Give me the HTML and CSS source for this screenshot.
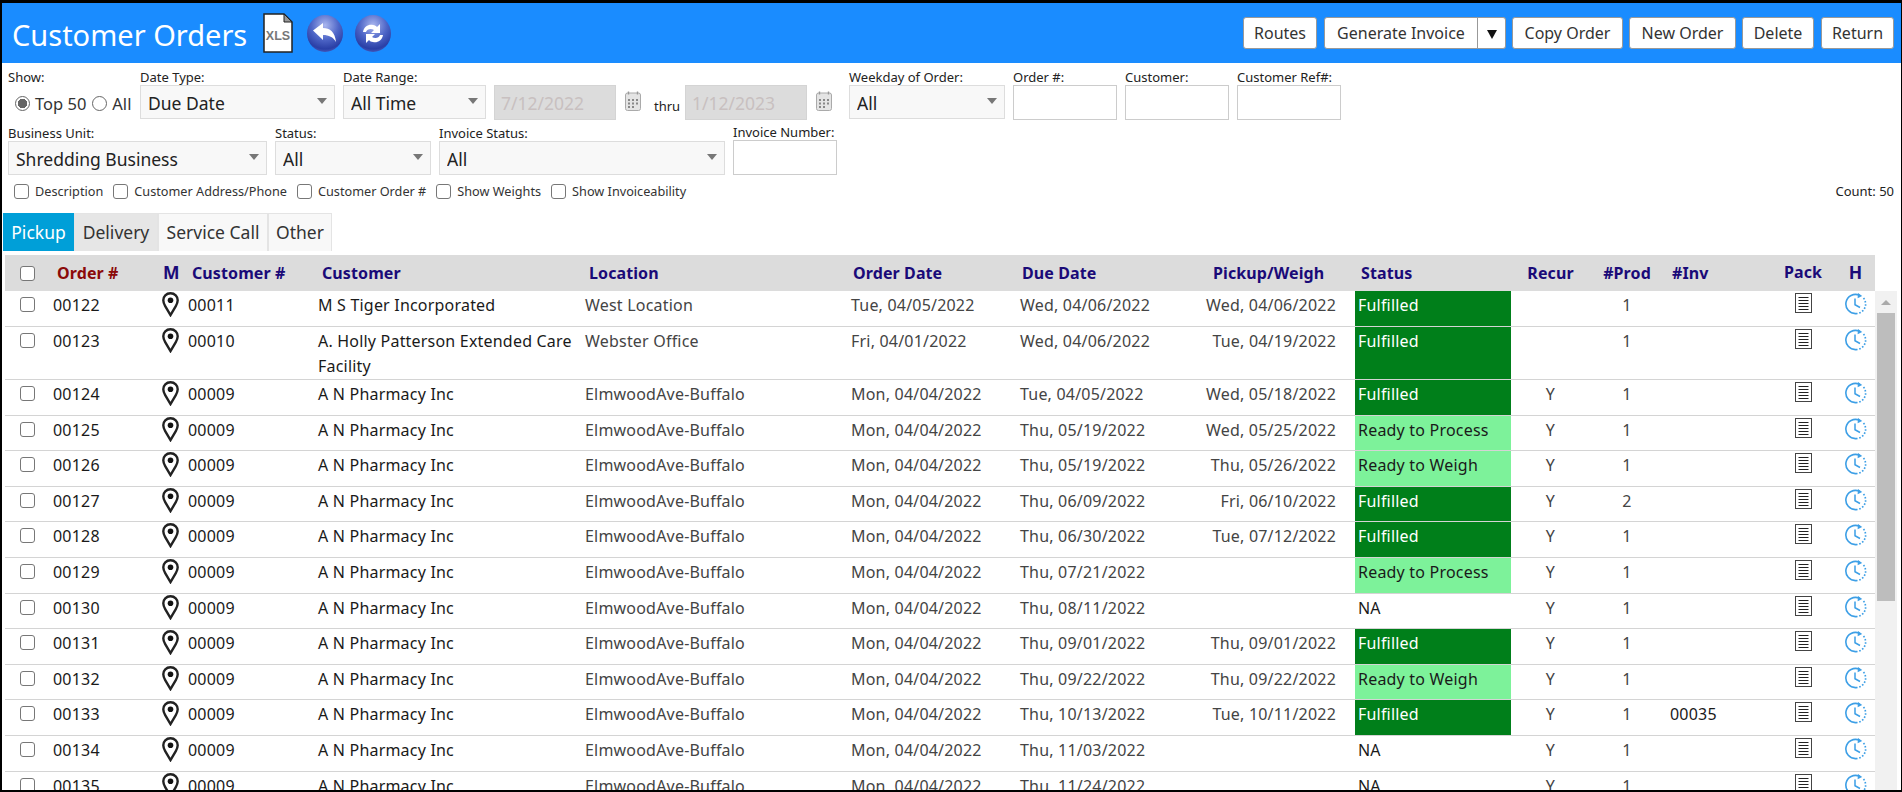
FILE: index.html
```html
<!DOCTYPE html>
<html lang="en">
<head>
  <meta charset="UTF-8" />
  <title>Customer Orders</title>
  <link rel="stylesheet" href="styles.css">
</head>
<body>
  <svg class="defs" width="0" height="0">
    <defs>
      <radialGradient id="ball" cx="50%" cy="28%" r="75%">
        <stop offset="0" stop-color="#aab6ee" />
        <stop offset="0.5" stop-color="#4f67c8" />
        <stop offset="0.85" stop-color="#2a3fa6" />
        <stop offset="1" stop-color="#4a5fc0" />
      </radialGradient>
      <symbol id="pin" viewBox="0 0 17 25">
        <path d="M8.5 1.3C4.2 1.3 1.3 4.4 1.3 8.3c0 2.2.8 3.9 1.9 5.8l5.3 9 5.3-9c1.1-1.9 1.9-3.6 1.9-5.8 0-3.9-2.9-7-7.2-7z" fill="#fff" stroke="#222" stroke-width="2.4" />
        <circle cx="8.5" cy="8.2" r="2.8" fill="#111" />
      </symbol>
      <symbol id="doc" viewBox="0 0 17 20">
        <rect x="0.5" y="0.5" width="16" height="19" fill="#fff" stroke="#444" />
        <path d="M3.5 4.5h10M3.5 7.5h10M3.5 10.5h10M3.5 13.5h10M3.5 16.5h10" stroke="#222" fill="none" />
      </symbol>
      <symbol id="clock" viewBox="0 0 22 22">
        <path d="M14.5 2.3A9.6 9.6 0 1 0 11 20.6" fill="none" stroke="#3d9fe6" stroke-width="1.6" />
        <path d="M11 20.6a9.6 9.6 0 0 0 9.6-9.6 9.6 9.6 0 0 0-2.8-6.8" fill="none" stroke="#3d9fe6" stroke-width="1.7" stroke-dasharray="1.6 1.7" />
        <path d="M13 0l4.2 3-4.6 2.2z" fill="#3d9fe6" />
        <path d="M10 5.5v6.2l5 2.8" fill="none" stroke="#3d9fe6" stroke-width="1.5" />
      </symbol>
      <symbol id="cal" viewBox="0 0 16 20">
        <rect x="0.5" y="2" width="15" height="17.5" rx="2" fill="#e4e4e4" stroke="#aaa" />
        <path d="M3.5 0.5v3M12.5 0.5v3" stroke="#999" stroke-width="1.4" />
        <path d="M3 8h2v2H3zM7 8h2v2H7zM11 8h2v2h-2zM3 11.5h2v2H3zM7 11.5h2v2H7zM11 11.5h2v2h-2zM3 15h2v2H3zM7 15h2v2H7z" fill="#888" />
      </symbol>
    </defs>
  </svg>

  <div class="page">
    <header class="topbar">
      <h1 class="title">Customer Orders</h1>
      <svg class="xls" width="30" height="40" viewBox="0 0 30 40">
        <path d="M1 1h20l8 8v30H1z" fill="#fff" stroke="#222" stroke-width="1.5" />
        <path d="M21 1v8h8z" fill="#999" stroke="#222" />
        <text x="15" y="27" text-anchor="middle" class="xls-text">XLS</text>
      </svg>
      <svg class="ball" width="36" height="37" viewBox="0 0 36 37">
        <ellipse cx="18" cy="18.5" rx="18" ry="18.5" fill="url(#ball)" />
        <path d="M6 15.5L16 8v5c7 0 12 4 13 14-3-5-7-7-13-7v5z" fill="#fff" />
      </svg>
      <svg class="ball" width="36" height="37" viewBox="0 0 36 37">
        <ellipse cx="18" cy="18.5" rx="18" ry="18.5" fill="url(#ball)" />
        <path d="M8 17c1-6 6-8 10-7 2 0 3 1 4 2l3-3v9h-9l3-3c-3-2-7-1-8 2zM28 20c-1 6-6 8-10 7-2 0-3-1-4-2l-3 3v-9h9l-3 3c3 2 7 1 8-2z" fill="#fff" />
      </svg>
      <div class="actions">
        <button class="btn w-routes">Routes</button>
        <div class="split">
          <button class="split-main">Generate Invoice</button>
          <button class="split-caret"><span class="caret"></span></button>
        </div>
        <button class="btn w-copy">Copy Order</button>
        <button class="btn w-new">New Order</button>
        <button class="btn w-delete">Delete</button>
        <button class="btn w-return">Return</button>
      </div>
    </header>

    <section class="filters">
      <div class="filter-row">
        <div class="field w-show">
          <label>Show:</label>
          <div class="radios">
            <input type="radio" name="show" checked /><span>Top 50</span>
            <input type="radio" name="show" /><span>All</span>
          </div>
        </div>
        <div class="field w-datetype">
          <label>Date Type:</label>
          <div class="dd"><select><option>Due Date</option></select></div>
        </div>
        <div class="field w-daterange">
          <label>Date Range:</label>
          <div class="dd"><select><option>All Time</option></select></div>
        </div>
        <div class="dates">
          <input class="date" type="text" value="7/12/2022" disabled />
          <svg class="cal" width="16" height="20"><use href="#cal" /></svg>
          <span class="thru">thru</span>
          <input class="date" type="text" value="1/12/2023" disabled />
          <svg class="cal" width="16" height="20"><use href="#cal" /></svg>
        </div>
        <div class="field w-weekday">
          <label>Weekday of Order:</label>
          <div class="dd"><select><option>All</option></select></div>
        </div>
        <div class="field w-num">
          <label>Order #:</label>
          <input class="num" type="text" />
        </div>
        <div class="field w-num">
          <label>Customer:</label>
          <input class="num" type="text" />
        </div>
        <div class="field w-num">
          <label>Customer Ref#:</label>
          <input class="num" type="text" />
        </div>
      </div>

      <div class="filter-row second">
        <div class="field w-unit">
          <label>Business Unit:</label>
          <div class="dd"><select><option>Shredding Business</option></select></div>
        </div>
        <div class="field w-status">
          <label>Status:</label>
          <div class="dd"><select><option>All</option></select></div>
        </div>
        <div class="field w-invstatus">
          <label>Invoice Status:</label>
          <div class="dd"><select><option>All</option></select></div>
        </div>
        <div class="field w-num">
          <label>Invoice Number:</label>
          <input class="num" type="text" />
        </div>
      </div>

      <div class="check-row">
        <label class="check"><input type="checkbox" />Description</label>
        <label class="check"><input type="checkbox" />Customer Address/Phone</label>
        <label class="check"><input type="checkbox" />Customer Order #</label>
        <label class="check"><input type="checkbox" />Show Weights</label>
        <label class="check"><input type="checkbox" />Show Invoiceability</label>
        <span class="count">Count: 50</span>
      </div>
    </section>

    <nav class="tabs">
      <a class="tab active w-pickup">Pickup</a>
      <a class="tab hover w-delivery">Delivery</a>
      <a class="tab w-service">Service Call</a>
      <a class="tab w-other">Other</a>
    </nav>

    <div class="grid-wrap">
      <table class="grid">
        <colgroup>
          <col class="c-check" /><col class="c-order" /><col class="c-map" /><col class="c-custno" />
          <col class="c-cust" /><col class="c-loc" /><col class="c-odate" /><col class="c-ddate" />
          <col class="c-pdate" /><col class="c-status" /><col class="c-recur" /><col class="c-prod" />
          <col class="c-inv" /><col class="c-pack" /><col class="c-hist" />
        </colgroup>
        <thead>
          <tr>
            <th class="ctr"><input type="checkbox" /></th>
            <th class="sorted">Order #</th>
            <th class="th-map"><span class="raised big">M</span></th>
            <th>Customer #</th>
            <th>Customer</th>
            <th>Location</th>
            <th class="tight">Order Date</th>
            <th class="tight">Due Date</th>
            <th class="th-pdate">Pickup/Weigh</th>
            <th class="tight">Status</th>
            <th class="ctr">Recur</th>
            <th class="ctr">#Prod</th>
            <th>#Inv</th>
            <th class="ctr"><span class="raised">Pack</span></th>
            <th class="ctr"><span class="raised big">H</span></th>
          </tr>
        </thead>
        <tbody>
          <tr><td class="ctr"><input type="checkbox" /></td><td class="dk">00122</td><td class="ico"><svg class="pin"><use href="#pin" /></svg></td><td class="dk">00011</td><td class="dk">M S Tiger Incorporated</td><td>West Location</td><td>Tue, 04/05/2022</td><td>Wed, 04/06/2022</td><td class="pdate">Wed, 04/06/2022</td><td class="st done">Fulfilled</td><td class="ctr"></td><td class="ctr">1</td><td class="dk"></td><td class="ctr"><svg class="doc"><use href="#doc" /></svg></td><td class="ctr"><svg class="clock"><use href="#clock" /></svg></td></tr>
          <tr><td class="ctr"><input type="checkbox" /></td><td class="dk">00123</td><td class="ico"><svg class="pin"><use href="#pin" /></svg></td><td class="dk">00010</td><td class="dk">A. Holly Patterson Extended Care Facility</td><td>Webster Office</td><td>Fri, 04/01/2022</td><td>Wed, 04/06/2022</td><td class="pdate">Tue, 04/19/2022</td><td class="st done">Fulfilled</td><td class="ctr"></td><td class="ctr">1</td><td class="dk"></td><td class="ctr"><svg class="doc"><use href="#doc" /></svg></td><td class="ctr"><svg class="clock"><use href="#clock" /></svg></td></tr>
          <tr><td class="ctr"><input type="checkbox" /></td><td class="dk">00124</td><td class="ico"><svg class="pin"><use href="#pin" /></svg></td><td class="dk">00009</td><td class="dk">A N Pharmacy Inc</td><td>ElmwoodAve-Buffalo</td><td>Mon, 04/04/2022</td><td>Tue, 04/05/2022</td><td class="pdate">Wed, 05/18/2022</td><td class="st done">Fulfilled</td><td class="ctr">Y</td><td class="ctr">1</td><td class="dk"></td><td class="ctr"><svg class="doc"><use href="#doc" /></svg></td><td class="ctr"><svg class="clock"><use href="#clock" /></svg></td></tr>
          <tr><td class="ctr"><input type="checkbox" /></td><td class="dk">00125</td><td class="ico"><svg class="pin"><use href="#pin" /></svg></td><td class="dk">00009</td><td class="dk">A N Pharmacy Inc</td><td>ElmwoodAve-Buffalo</td><td>Mon, 04/04/2022</td><td>Thu, 05/19/2022</td><td class="pdate">Wed, 05/25/2022</td><td class="st ready">Ready to Process</td><td class="ctr">Y</td><td class="ctr">1</td><td class="dk"></td><td class="ctr"><svg class="doc"><use href="#doc" /></svg></td><td class="ctr"><svg class="clock"><use href="#clock" /></svg></td></tr>
          <tr><td class="ctr"><input type="checkbox" /></td><td class="dk">00126</td><td class="ico"><svg class="pin"><use href="#pin" /></svg></td><td class="dk">00009</td><td class="dk">A N Pharmacy Inc</td><td>ElmwoodAve-Buffalo</td><td>Mon, 04/04/2022</td><td>Thu, 05/19/2022</td><td class="pdate">Thu, 05/26/2022</td><td class="st ready">Ready to Weigh</td><td class="ctr">Y</td><td class="ctr">1</td><td class="dk"></td><td class="ctr"><svg class="doc"><use href="#doc" /></svg></td><td class="ctr"><svg class="clock"><use href="#clock" /></svg></td></tr>
          <tr><td class="ctr"><input type="checkbox" /></td><td class="dk">00127</td><td class="ico"><svg class="pin"><use href="#pin" /></svg></td><td class="dk">00009</td><td class="dk">A N Pharmacy Inc</td><td>ElmwoodAve-Buffalo</td><td>Mon, 04/04/2022</td><td>Thu, 06/09/2022</td><td class="pdate">Fri, 06/10/2022</td><td class="st done">Fulfilled</td><td class="ctr">Y</td><td class="ctr">2</td><td class="dk"></td><td class="ctr"><svg class="doc"><use href="#doc" /></svg></td><td class="ctr"><svg class="clock"><use href="#clock" /></svg></td></tr>
          <tr><td class="ctr"><input type="checkbox" /></td><td class="dk">00128</td><td class="ico"><svg class="pin"><use href="#pin" /></svg></td><td class="dk">00009</td><td class="dk">A N Pharmacy Inc</td><td>ElmwoodAve-Buffalo</td><td>Mon, 04/04/2022</td><td>Thu, 06/30/2022</td><td class="pdate">Tue, 07/12/2022</td><td class="st done">Fulfilled</td><td class="ctr">Y</td><td class="ctr">1</td><td class="dk"></td><td class="ctr"><svg class="doc"><use href="#doc" /></svg></td><td class="ctr"><svg class="clock"><use href="#clock" /></svg></td></tr>
          <tr><td class="ctr"><input type="checkbox" /></td><td class="dk">00129</td><td class="ico"><svg class="pin"><use href="#pin" /></svg></td><td class="dk">00009</td><td class="dk">A N Pharmacy Inc</td><td>ElmwoodAve-Buffalo</td><td>Mon, 04/04/2022</td><td>Thu, 07/21/2022</td><td class="pdate"></td><td class="st ready">Ready to Process</td><td class="ctr">Y</td><td class="ctr">1</td><td class="dk"></td><td class="ctr"><svg class="doc"><use href="#doc" /></svg></td><td class="ctr"><svg class="clock"><use href="#clock" /></svg></td></tr>
          <tr><td class="ctr"><input type="checkbox" /></td><td class="dk">00130</td><td class="ico"><svg class="pin"><use href="#pin" /></svg></td><td class="dk">00009</td><td class="dk">A N Pharmacy Inc</td><td>ElmwoodAve-Buffalo</td><td>Mon, 04/04/2022</td><td>Thu, 08/11/2022</td><td class="pdate"></td><td class="st na">NA</td><td class="ctr">Y</td><td class="ctr">1</td><td class="dk"></td><td class="ctr"><svg class="doc"><use href="#doc" /></svg></td><td class="ctr"><svg class="clock"><use href="#clock" /></svg></td></tr>
          <tr><td class="ctr"><input type="checkbox" /></td><td class="dk">00131</td><td class="ico"><svg class="pin"><use href="#pin" /></svg></td><td class="dk">00009</td><td class="dk">A N Pharmacy Inc</td><td>ElmwoodAve-Buffalo</td><td>Mon, 04/04/2022</td><td>Thu, 09/01/2022</td><td class="pdate">Thu, 09/01/2022</td><td class="st done">Fulfilled</td><td class="ctr">Y</td><td class="ctr">1</td><td class="dk"></td><td class="ctr"><svg class="doc"><use href="#doc" /></svg></td><td class="ctr"><svg class="clock"><use href="#clock" /></svg></td></tr>
          <tr><td class="ctr"><input type="checkbox" /></td><td class="dk">00132</td><td class="ico"><svg class="pin"><use href="#pin" /></svg></td><td class="dk">00009</td><td class="dk">A N Pharmacy Inc</td><td>ElmwoodAve-Buffalo</td><td>Mon, 04/04/2022</td><td>Thu, 09/22/2022</td><td class="pdate">Thu, 09/22/2022</td><td class="st ready">Ready to Weigh</td><td class="ctr">Y</td><td class="ctr">1</td><td class="dk"></td><td class="ctr"><svg class="doc"><use href="#doc" /></svg></td><td class="ctr"><svg class="clock"><use href="#clock" /></svg></td></tr>
          <tr><td class="ctr"><input type="checkbox" /></td><td class="dk">00133</td><td class="ico"><svg class="pin"><use href="#pin" /></svg></td><td class="dk">00009</td><td class="dk">A N Pharmacy Inc</td><td>ElmwoodAve-Buffalo</td><td>Mon, 04/04/2022</td><td>Thu, 10/13/2022</td><td class="pdate">Tue, 10/11/2022</td><td class="st done">Fulfilled</td><td class="ctr">Y</td><td class="ctr">1</td><td class="dk inv">00035</td><td class="ctr"><svg class="doc"><use href="#doc" /></svg></td><td class="ctr"><svg class="clock"><use href="#clock" /></svg></td></tr>
          <tr><td class="ctr"><input type="checkbox" /></td><td class="dk">00134</td><td class="ico"><svg class="pin"><use href="#pin" /></svg></td><td class="dk">00009</td><td class="dk">A N Pharmacy Inc</td><td>ElmwoodAve-Buffalo</td><td>Mon, 04/04/2022</td><td>Thu, 11/03/2022</td><td class="pdate"></td><td class="st na">NA</td><td class="ctr">Y</td><td class="ctr">1</td><td class="dk"></td><td class="ctr"><svg class="doc"><use href="#doc" /></svg></td><td class="ctr"><svg class="clock"><use href="#clock" /></svg></td></tr>
          <tr><td class="ctr"><input type="checkbox" /></td><td class="dk">00135</td><td class="ico"><svg class="pin"><use href="#pin" /></svg></td><td class="dk">00009</td><td class="dk">A N Pharmacy Inc</td><td>ElmwoodAve-Buffalo</td><td>Mon, 04/04/2022</td><td>Thu, 11/24/2022</td><td class="pdate"></td><td class="st na">NA</td><td class="ctr">Y</td><td class="ctr">1</td><td class="dk"></td><td class="ctr"><svg class="doc"><use href="#doc" /></svg></td><td class="ctr"><svg class="clock"><use href="#clock" /></svg></td></tr>
        </tbody>
      </table>
      <div class="scrollbar">
        <span class="scroll-up"></span>
        <span class="scroll-thumb"></span>
      </div>
    </div>
  </div>
</body>
</html>
```

FILE: styles.css
```css
html, body {
  margin: 0;
  padding: 0;
  height: 100%;
  overflow: hidden;
  background: #000;
  color: #222;
  font-family: "Noto Sans", "Open Sans", sans-serif;
}

.defs {
  position: absolute;
}

.page {
  height: 787px;
  margin: 3px 1px 0 2px;
  background: #fff;
  overflow: hidden;
}

/* top blue bar */
.topbar {
  display: flex;
  align-items: center;
  height: 60px;
  padding: 0 7px 0 10px;
  background: #1a8cff;
}

.title {
  margin: 3px 16px 0 0;
  font-size: 29px;
  font-weight: 400;
  color: #fff;
  white-space: nowrap;
}

.xls-text {
  font-family: "Liberation Sans", sans-serif;
  font-size: 12.5px;
  font-weight: 700;
  fill: #777;
}

.xls {
  margin-right: 14px;
}

.ball {
  margin-right: 12px;
}

.actions {
  display: flex;
  align-items: center;
  gap: 6px;
  margin-left: auto;
}

.btn,
.split-main,
.split-caret {
  height: 32px;
  padding: 0;
  font: inherit;
  font-size: 16px;
  color: #333;
  background: #fff;
  border: 1px solid #999;
  border-radius: 3px;
}

.w-routes { width: 74px; margin-right: 1px; }
.w-copy { width: 111px; }
.w-new { width: 107px; }
.w-delete { width: 72px; margin-right: 1px; }
.w-return { width: 73px; }

.split {
  display: flex;
}

.split-main {
  width: 154px;
  border-radius: 3px 0 0 3px;
}

.split-caret {
  width: 28px;
  border-left: 0;
  border-radius: 0 3px 3px 0;
}

.caret {
  display: inline-block;
  border-left: 5px solid transparent;
  border-right: 5px solid transparent;
  border-top: 9px solid #111;
}

/* filter area */
.filters {
  padding: 7px 0 0 6px;
}

.filter-row {
  display: flex;
  align-items: flex-start;
  height: 50px;
  gap: 8px;
}

.filter-row.second {
  align-items: flex-end;
  height: 49px;
  margin-top: 6px;
}

.field {
  display: flex;
  flex-direction: column;
  flex: none;
}

.field label {
  height: 15px;
  font-size: 13px;
  line-height: 15px;
  color: #222;
  white-space: nowrap;
}

.w-show { width: 124px; }
.w-datetype { width: 195px; }
.w-daterange { width: 143px; }
.w-weekday { width: 156px; }
.w-num { width: 104px; }
.w-unit { width: 259px; }
.w-status { width: 156px; }
.w-invstatus { width: 286px; }

.radios {
  display: flex;
  align-items: center;
  height: 26px;
  padding: 5px 0 0 7px;
  font-size: 16.5px;
  color: #333;
  white-space: nowrap;
}

.radios input {
  appearance: none;
  box-sizing: border-box;
  flex: none;
  width: 15px;
  height: 15px;
  margin: 0 5px 0 0;
  border: 1px solid #666;
  border-radius: 50%;
  background: #fff;
}

.radios input:checked {
  background: radial-gradient(circle, #666 0 4.5px, #fff 5px);
}

.radios span {
  margin-right: 6px;
}

.dd {
  position: relative;
}

.dd select {
  appearance: none;
  box-sizing: border-box;
  display: block;
  width: 100%;
  height: 34px;
  padding: 2px 24px 0 7px;
  font: inherit;
  font-size: 17.5px;
  color: #222;
  background: #f8f8f8;
  border: 1px solid #ddd;
  outline: none;
}

.dd::after {
  content: "";
  position: absolute;
  right: 8px;
  top: 13px;
  border-left: 5px solid transparent;
  border-right: 5px solid transparent;
  border-top: 6px solid #777;
}

.dates {
  display: flex;
  align-items: center;
  flex: none;
  height: 35px;
  margin: 15px 9px 0 0;
}

.date {
  box-sizing: border-box;
  width: 122px;
  height: 35px;
  padding: 0 6px;
  font: inherit;
  font-size: 17.5px;
  color: #c8c0c0;
  background: #dcdcdc;
  border: 1px solid #d4d4d4;
}

.cal {
  margin: -3px 0 0 9px;
}

.thru {
  width: 31px;
  margin: 6px 0 0 13px;
  font-size: 13px;
  color: #222;
}

.num {
  box-sizing: border-box;
  width: 104px;
  height: 35px;
  border: 1px solid #ccc;
  background: #fff;
}

/* checkbox row */
.check-row {
  display: flex;
  align-items: center;
  height: 22px;
  margin-top: 5px;
  padding: 0 7px 0 6px;
}

.check {
  display: flex;
  align-items: center;
  margin-right: 10px;
  font-size: 12.7px;
  color: #333;
  white-space: nowrap;
}

input[type="checkbox"] {
  appearance: none;
  display: block;
  box-sizing: border-box;
  width: 15px;
  height: 15px;
  margin: 0;
  background: #fff;
  border: 1.5px solid #777;
  border-radius: 3px;
}

.check input {
  margin-right: 6px;
}

.count {
  margin-left: auto;
  font-size: 13px;
  color: #222;
}

/* tabs */
.tabs {
  display: flex;
  height: 38px;
  margin: 11px 0 4px 1px;
}

.tab {
  box-sizing: border-box;
  padding-top: 7px;
  text-align: center;
  font-size: 17.5px;
  line-height: 22px;
  color: #333;
  background: #f8f8f8;
  border: 1px solid #e4e4e4;
  border-bottom: 0;
}

.tab.active {
  color: #fff;
  background: #009fd8;
  border-color: #009fd8;
}

.tab.hover {
  background: #e6e6e6;
}

.w-pickup { width: 71px; }
.w-delivery { width: 84px; }
.w-service { width: 110px; }
.w-other { width: 64px; }

/* orders grid */
.grid-wrap {
  display: flex;
  align-items: flex-start;
  padding-left: 3px;
}

.grid {
  flex: none;
  width: 1870px;
  table-layout: fixed;
  border-collapse: collapse;
  font-size: 16px;
  letter-spacing: 0.2px;
}

.c-check { width: 44px; }
.c-order { width: 109px; }
.c-map { width: 26px; }
.c-custno { width: 130px; }
.c-cust { width: 267px; }
.c-loc { width: 266px; }
.c-odate { width: 169px; }
.c-ddate { width: 170px; }
.c-pdate { width: 169px; }
.c-status { width: 156px; }
.c-recur { width: 79px; }
.c-prod { width: 74px; }
.c-inv { width: 106px; }
.c-pack { width: 66px; }
.c-hist { width: 39px; }

.grid th {
  box-sizing: border-box;
  height: 36px;
  padding: 0 0 0 8px;
  text-align: left;
  font-size: 16px;
  font-weight: 700;
  letter-spacing: 0.1px;
  color: #1a0a78;
  background: #dcdcdc;
  white-space: nowrap;
}

.grid th.tight {
  padding-left: 6px;
}

.grid th.sorted {
  color: #8b0a0a;
}

.grid th.ctr {
  padding: 0;
  text-align: center;
}

.grid th input {
  margin: 0 auto;
}

.grid th.th-map {
  padding-left: 5px;
  overflow: visible;
}

.grid th.th-pdate {
  padding-left: 27px;
}

.raised {
  display: inline-block;
  margin-bottom: 3px;
}

.raised.big {
  font-size: 17.5px;
}

.grid td {
  box-sizing: border-box;
  height: 35.6px;
  padding: 2px 4px 0;
  vertical-align: top;
  line-height: 25px;
  color: #444;
  border-bottom: 1px solid #d4d4d4;
}

.grid td.dk {
  color: #1a1a1a;
}

.grid td.ctr {
  padding: 2px 0 0;
  text-align: center;
}

.grid td.ctr input {
  margin: 4px auto 0;
}

.grid td.ico {
  padding: 1px 0 0 4px;
  overflow: visible;
}

.grid td.pdate {
  padding-right: 19px;
  text-align: right;
}

.grid td.st {
  padding-left: 3px;
  color: #1a1a1a;
}

.grid td.done {
  color: #fff;
  background: #007f1a;
}

.grid td.ready {
  background: #7df29a;
}

.grid td.inv {
  padding-left: 6px;
}

.pin {
  display: block;
  width: 17px;
  height: 25px;
}

.doc {
  display: inline-block;
  width: 17px;
  height: 20px;
}

.clock {
  display: inline-block;
  width: 22px;
  height: 22px;
}

/* scrollbar drawn next to the grid */
.scrollbar {
  flex: none;
  position: relative;
  width: 22px;
  height: 500px;
  margin-top: 36px;
  background: #f1f1f1;
}

.scroll-up {
  position: absolute;
  left: 6px;
  top: 9px;
  border-left: 5px solid transparent;
  border-right: 5px solid transparent;
  border-bottom: 5px solid #aaa;
}

.scroll-thumb {
  position: absolute;
  left: 2px;
  top: 22px;
  width: 18px;
  height: 288px;
  background: #bdbdbd;
}
```
